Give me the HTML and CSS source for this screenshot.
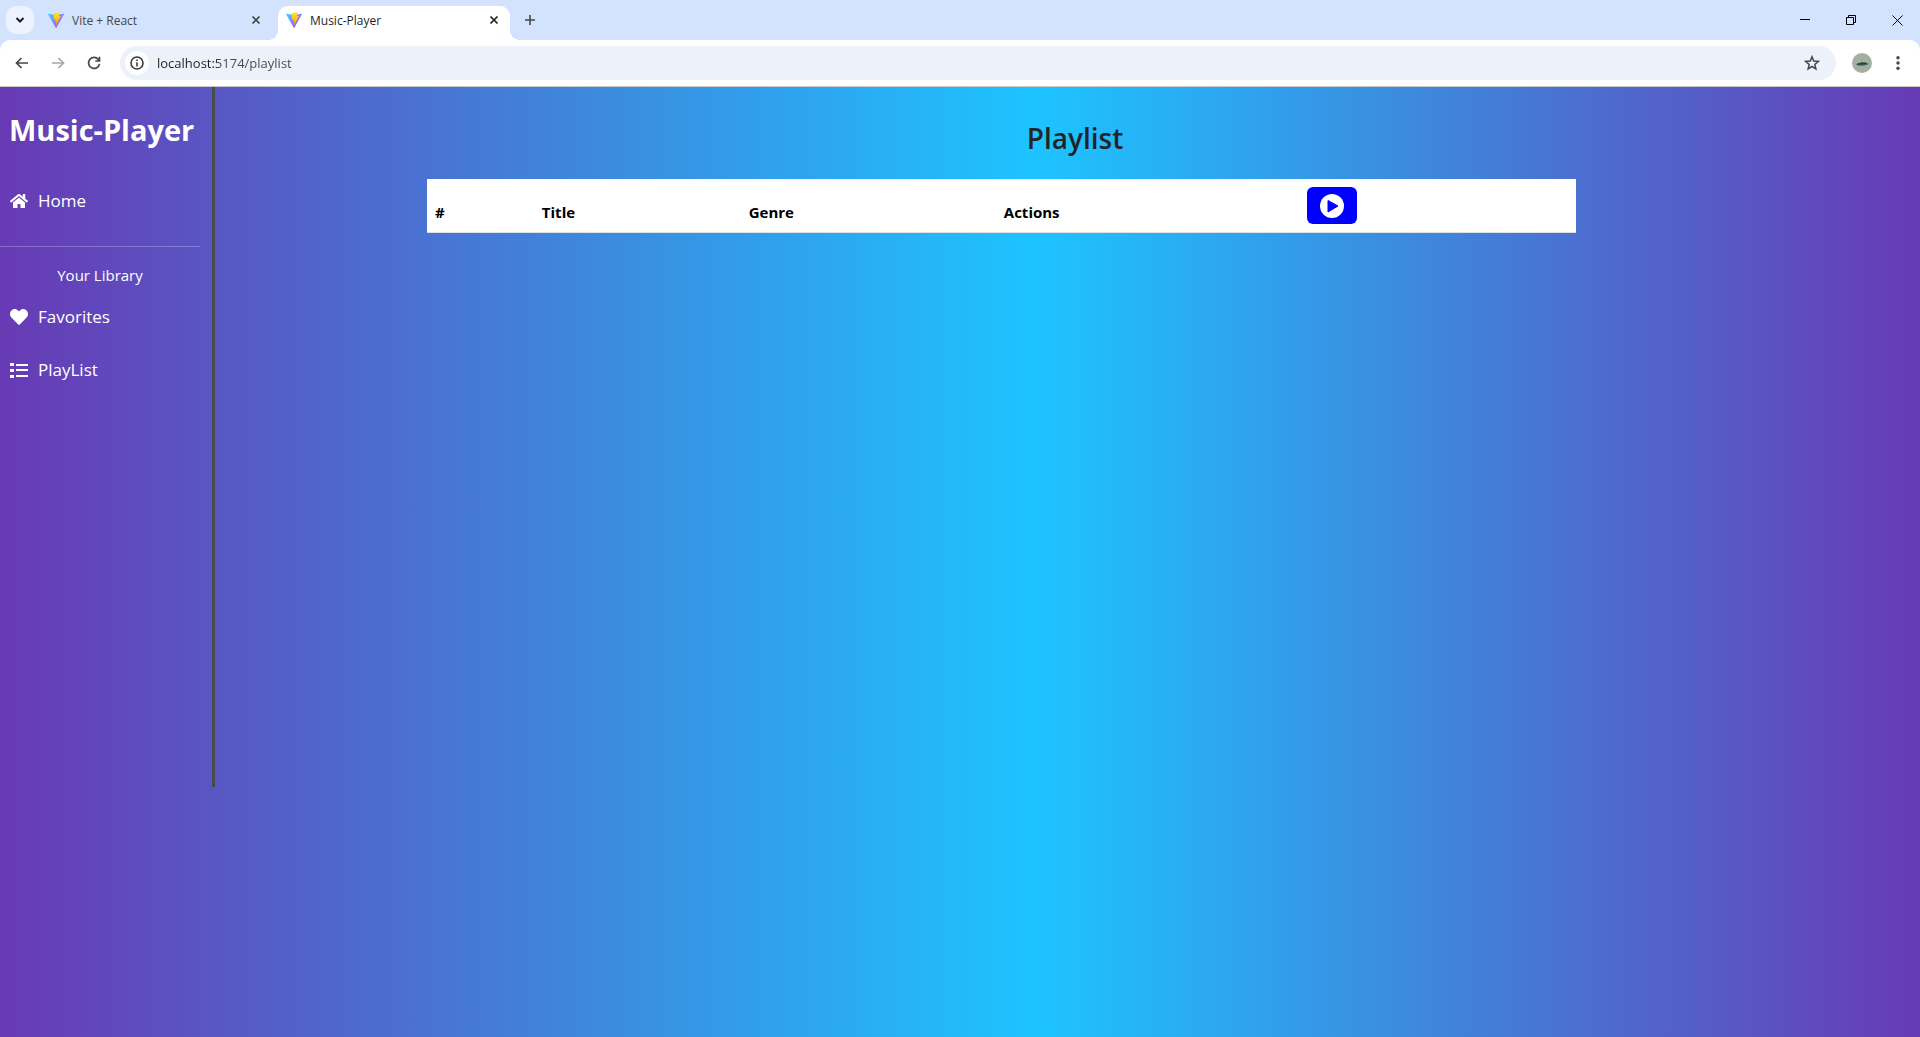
FILE: index.html
```html
<!DOCTYPE html>
<html lang="en">
<head>
<meta charset="utf-8">
<title>Music-Player</title>
<link rel="stylesheet" href="styles.css">
</head>
<body>
<svg class="defs" aria-hidden="true">
  <defs>
    <linearGradient id="vite-body" x1="0" y1="0" x2="1" y2="1"><stop offset="0" stop-color="#41d1ff"/><stop offset="1" stop-color="#bd34fe"/></linearGradient>
    <linearGradient id="vite-bolt" x1="0" y1="0" x2="0" y2="1"><stop offset="0" stop-color="#ffea83"/><stop offset=".1" stop-color="#ffdd35"/><stop offset="1" stop-color="#ffa800"/></linearGradient>
    <symbol id="vite" viewBox="0 0 256 257">
      <path fill="url(#vite-body)" d="M255.153 37.938 134.897 252.976c-2.483 4.44-8.862 4.466-11.382.048L.875 37.958c-2.746-4.814 1.371-10.646 6.827-9.67l120.385 21.517a6.537 6.537 0 0 0 2.322-.004l117.867-21.483c5.438-.991 9.574 4.796 6.877 9.62Z"/>
      <path fill="url(#vite-bolt)" d="M185.432.063 96.44 17.501a3.268 3.268 0 0 0-2.634 3.014l-5.474 92.456a3.268 3.268 0 0 0 3.997 3.378l24.777-5.718c2.318-.535 4.413 1.507 3.936 3.838l-7.361 36.047c-.495 2.426 1.782 4.5 4.151 3.78l15.304-4.649c2.372-.72 4.652 1.36 4.15 3.788l-11.698 56.621c-.732 3.542 3.979 5.473 5.943 2.437l1.313-2.028 72.516-144.72c1.215-2.423-.88-5.186-3.54-4.672l-25.505 4.922c-2.396.462-4.435-1.77-3.759-4.114l16.646-57.705c.677-2.35-1.37-4.583-3.769-4.113Z"/>
    </symbol>
    <symbol id="cross" viewBox="0 0 10 10"><path d="M1.500 1.500l7 7m0-7l-7 7" fill="none" stroke="currentColor" stroke-width="1.700"/></symbol>
  </defs>
</svg>

<header class="browser">
  <div class="tab-strip">
    <button class="tab-search" aria-label="Search tabs"><svg width="10" height="8" viewBox="0 0 10 8"><path d="M1.500 2l3.500 3.500L8.500 2" fill="none" stroke="#1f1f1f" stroke-width="2"/></svg></button>
    <div class="tab">
      <svg class="favicon"><use href="#vite"/></svg>
      <span class="tab-title">Vite + React</span>
      <button class="tab-close" aria-label="Close Vite + React"><svg width="10" height="10"><use href="#cross"/></svg></button>
    </div>
    <div class="tab tab-active">
      <svg class="favicon"><use href="#vite"/></svg>
      <span class="tab-title">Music-Player</span>
      <button class="tab-close" aria-label="Close Music-Player"><svg width="10" height="10"><use href="#cross"/></svg></button>
    </div>
    <button class="new-tab" aria-label="New tab"><svg width="12" height="12" viewBox="0 0 12 12"><path d="M6 1v10M1 6h10" stroke="#474747" stroke-width="1.600"/></svg></button>
    <div class="window-controls">
      <button aria-label="Minimize"><svg width="10" height="10"><path d="M0 4h10v1H0z"/></svg></button>
      <button aria-label="Restore"><svg width="10" height="10" fill="none" stroke="#000"><path d="M.5 2.500h7v7h-7zM2.500 2.500v-2h7v7h-2"/></svg></button>
      <button aria-label="Close"><svg width="11" height="11"><path d="M.5.5l10 10m0-10l-10 10" stroke="#000"/></svg></button>
    </div>
  </div>
  <div class="toolbar">
    <button class="tool" aria-label="Back"><svg width="14" height="12" viewBox="0 0 14 12"><path d="M6.500 1l-5 5 5 5M1.500 6H13" fill="none" stroke="#474747" stroke-width="1.700"/></svg></button>
    <button class="tool" aria-label="Forward" disabled><svg width="14" height="12" viewBox="0 0 14 12"><path d="M7.500 1l5 5-5 5M12.500 6H1" fill="none" stroke="#a8a8a8" stroke-width="1.700"/></svg></button>
    <button class="tool" aria-label="Reload"><svg width="14" height="14" viewBox="0 0 14 14"><path d="M12.500 7.800A5.500 5.500 0 1 1 11.200 3.300L12.600 4.700M12.500 .8v4.200H8.300" fill="none" stroke="#474747" stroke-width="1.700"/></svg></button>
    <div class="omnibox">
      <button class="site-info" aria-label="Site information"><svg width="14" height="14" viewBox="0 0 14 14"><circle cx="7" cy="7" r="6" fill="none" stroke="#3c3c3c" stroke-width="1.600"/><path d="M6.200 3.500h1.600v1.600H6.200zM6.200 6.200h1.600v4.300H6.200z" fill="#3c3c3c"/></svg></button>
      <input class="url" type="text" aria-label="Address" value="localhost:5174/playlist">
      <button class="star" aria-label="Bookmark"><svg width="16" height="16" viewBox="0 0 16 16"><path d="M8 1.800l1.700 4.200 4.600.4-3.500 3 1.100 4.500L8 11.500l-3.900 2.400 1.100-4.500-3.500-3 4.600-.4z" fill="none" stroke="#474747" stroke-width="1.500"/></svg></button>
    </div>
    <button class="avatar" aria-label="Profile"><svg width="20" height="20" viewBox="0 0 20 20"><circle cx="10" cy="10" r="10" fill="#a2b09f"/><path d="M4 11.300l3-1 2.500-1.300 4 .2 2.700 1.300-.5 1.200-5 1-5-.3z" fill="#3e6767"/><path d="M5 11l9-.4" stroke="#1c3439"/></svg></button>
    <button class="menu" aria-label="Menu"><svg width="4" height="14" viewBox="0 0 4 14" fill="#474747"><circle cx="2" cy="1.700" r="1.700"/><circle cx="2" cy="7" r="1.700"/><circle cx="2" cy="12.300" r="1.700"/></svg></button>
  </div>
</header>

<div class="app">
  <nav class="sidebar">
    <h1 class="brand">Music-Player</h1>
    <a class="nav-link" href="#home"><svg class="nav-icon" viewBox="0 0 576 512"><path d="M280.370 148.260L96 300.110V464a16 16 0 0 0 16 16l112.060-.29a16 16 0 0 0 15.920-16V368a16 16 0 0 1 16-16h64a16 16 0 0 1 16 16v95.640a16 16 0 0 0 16 16.050L464 480a16 16 0 0 0 16-16V300L295.670 148.260a12.190 12.190 0 0 0-15.300 0zM571.600 251.470L488 182.560V44.050a12 12 0 0 0-12-12h-56a12 12 0 0 0-12 12v72.610L318.470 43a48 48 0 0 0-61 0L4.340 251.470a12 12 0 0 0-1.600 16.900l25.500 31A12 12 0 0 0 45.150 301l235.220-193.740a12.190 12.190 0 0 1 15.300 0L530.900 301a12 12 0 0 0 16.900-1.600l25.500-31a12 12 0 0 0-1.700-16.930z"/></svg>Home</a>
    <hr class="divider">
    <p class="library">Your Library</p>
    <a class="nav-link" href="#favorites"><svg class="nav-icon" viewBox="0 0 512 512"><path d="M462.300 62.600C407.500 15.900 326 24.300 275.700 76.200L256 96.500l-19.700-20.300C186.100 24.300 104.500 15.900 49.700 62.600c-62.800 53.600-66.100 149.800-9.900 207.900l193.500 199.800c12.500 12.900 32.800 12.900 45.300 0l193.500-199.800c56.300-58.100 53-154.300-9.800-207.900z"/></svg>Favorites</a>
    <a class="nav-link" href="#playlist"><svg class="nav-icon" viewBox="0 0 18 18" shape-rendering="crispEdges"><path d="M0 2h4v3H0zM0 8h4v3H0zM0 14h4v3H0zM6 3h12v2H6zM6 8h12v2H6zM6 14h12v2H6z"/></svg>PlayList</a>
  </nav>
  <main class="content">
    <h2 class="heading">Playlist</h2>
    <table class="playlist">
      <thead>
        <tr>
          <th class="col-num">#</th>
          <th class="col-title">Title</th>
          <th class="col-genre">Genre</th>
          <th class="col-actions">Actions</th>
          <th><button class="play" aria-label="Play all"><svg width="24" height="24" viewBox="0 0 24 24"><circle cx="12" cy="12" r="12" fill="#fff"/><path d="M8 6.500l10 5.500-10 6z" fill="#00f" stroke="#00f" stroke-linejoin="round"/></svg></button></th>
        </tr>
      </thead>
    </table>
  </main>
</div>
</body>
</html>
```
FILE: styles.css
```css
* { box-sizing: border-box; }

body {
  margin: 0;
  min-height: 100vh;
  display: flex;
  flex-direction: column;
  font-family: "Open Sans", "Noto Sans", sans-serif;
  font-size: 15px;
}

button {
  display: flex;
  align-items: center;
  justify-content: center;
  padding: 0;
  border: 0;
  background: none;
  color: inherit;
}

.defs { position: absolute; width: 0; height: 0; }

/* Browser frame */
.browser { background: #d3e3fd; border-bottom: 1px solid #c7c9cc; }

.tab-strip {
  display: flex;
  align-items: center;
  height: 40px;
  padding-left: 6px;
}

.tab-search {
  width: 28px;
  height: 28px;
  border-radius: 10px;
  background: #ecf2fe;
}

.tab {
  position: relative;
  align-self: flex-end;
  display: flex;
  align-items: center;
  gap: 8px;
  width: 232px;
  height: 34px;
  padding: 0 10px 6px 8px;
  color: #474747;
}

.tab-search + .tab { margin-left: 6px; }

.tab-active {
  margin-left: 6px;
  background: #fff;
  border-radius: 10px 10px 0 0;
  color: #1f1f1f;
}

.tab-active::before,
.tab-active::after {
  content: "";
  position: absolute;
  bottom: 0;
  width: 10px;
  height: 10px;
}

.tab-active::before { right: 100%; background: radial-gradient(circle at 0 0, transparent 10px, #fff 10px); }
.tab-active::after { left: 100%; background: radial-gradient(circle at 100% 0, transparent 10px, #fff 10px); }

.favicon { width: 16px; height: 16px; }
.tab-title { flex: 1; font-size: 12px; }
.tab-close { width: 12px; height: 16px; }
.new-tab { width: 28px; height: 28px; margin-left: 6px; }

.window-controls { display: flex; margin-left: auto; }
.window-controls button { width: 46px; height: 40px; }

.toolbar {
  display: flex;
  align-items: center;
  height: 46px;
  padding: 0 12px 0 4px;
  background: #fff;
  border-radius: 10px 10px 0 0;
}

.tool { width: 36px; height: 34px; }

.omnibox {
  flex: 1;
  display: flex;
  align-items: center;
  height: 34px;
  margin-left: 8px;
  padding: 0 16px 0 5px;
  border-radius: 17px;
  background: #ecf1fa;
}

.site-info { width: 24px; height: 24px; border-radius: 50%; background: #fff; }

.url {
  flex: 1;
  padding: 0;
  margin-left: 8px;
  border: 0;
  outline: 0;
  font: 13px "Open Sans", "Noto Sans", sans-serif;
  color: transparent;
  background: linear-gradient(90deg, #1f1f1f 60px, #474747 60px);
  background-clip: text;
}

.avatar { margin-left: 16px; }
.menu { width: 20px; height: 34px; margin-left: 16px; }

/* Application */
.app {
  flex: 1;
  display: flex;
  align-items: flex-start;
  background: linear-gradient(90deg, #683ab4 0%, #1dc4ff 54%, #683ab4 100%);
}

.sidebar {
  width: 215px;
  min-height: 700px;
  border-right: 3px solid #4a4a4a;
  color: #fff;
}

.brand {
  margin: 23px 0 32px;
  padding-left: 9px;
  font-size: 29px;
  line-height: 40px;
  font-weight: 700;
}

.nav-link {
  display: flex;
  align-items: center;
  gap: 10px;
  height: 37px;
  margin-bottom: 16px;
  padding-left: 10px;
  font-size: 17px;
  color: #fff;
  text-decoration: none;
}

.nav-icon { width: 18px; height: 18px; fill: currentColor; }

.divider {
  width: 200px;
  height: 1px;
  margin: 27px 0 16px;
  border: 0;
  background: rgba(255, 255, 255, 0.25);
}

.library {
  margin: 0 0 11px;
  width: 200px;
  font-size: 15px;
  line-height: 24px;
  text-align: center;
}

.content { flex: 1; padding: 31px 0 0 15px; }

.heading {
  margin: 0 0 21px;
  font-size: 28px;
  line-height: 40px;
  font-weight: 600;
  text-align: center;
  color: #212529;
}

.playlist {
  width: 68%;
  margin-left: 197px;
  table-layout: fixed;
  border-collapse: collapse;
  background: #fff;
  border-bottom: 1px solid #dee2e6;
}

.playlist th {
  padding: 8px;
  text-align: left;
  vertical-align: bottom;
  font-weight: 700;
  line-height: 24px;
  color: #000;
}

.col-num { width: 9.3%; }
.col-title { width: 18%; }
.col-genre { width: 22.2%; }
.col-actions { width: 26.4%; }

.play { width: 50px; height: 37px; border-radius: 6px; background: #00f; }
```
